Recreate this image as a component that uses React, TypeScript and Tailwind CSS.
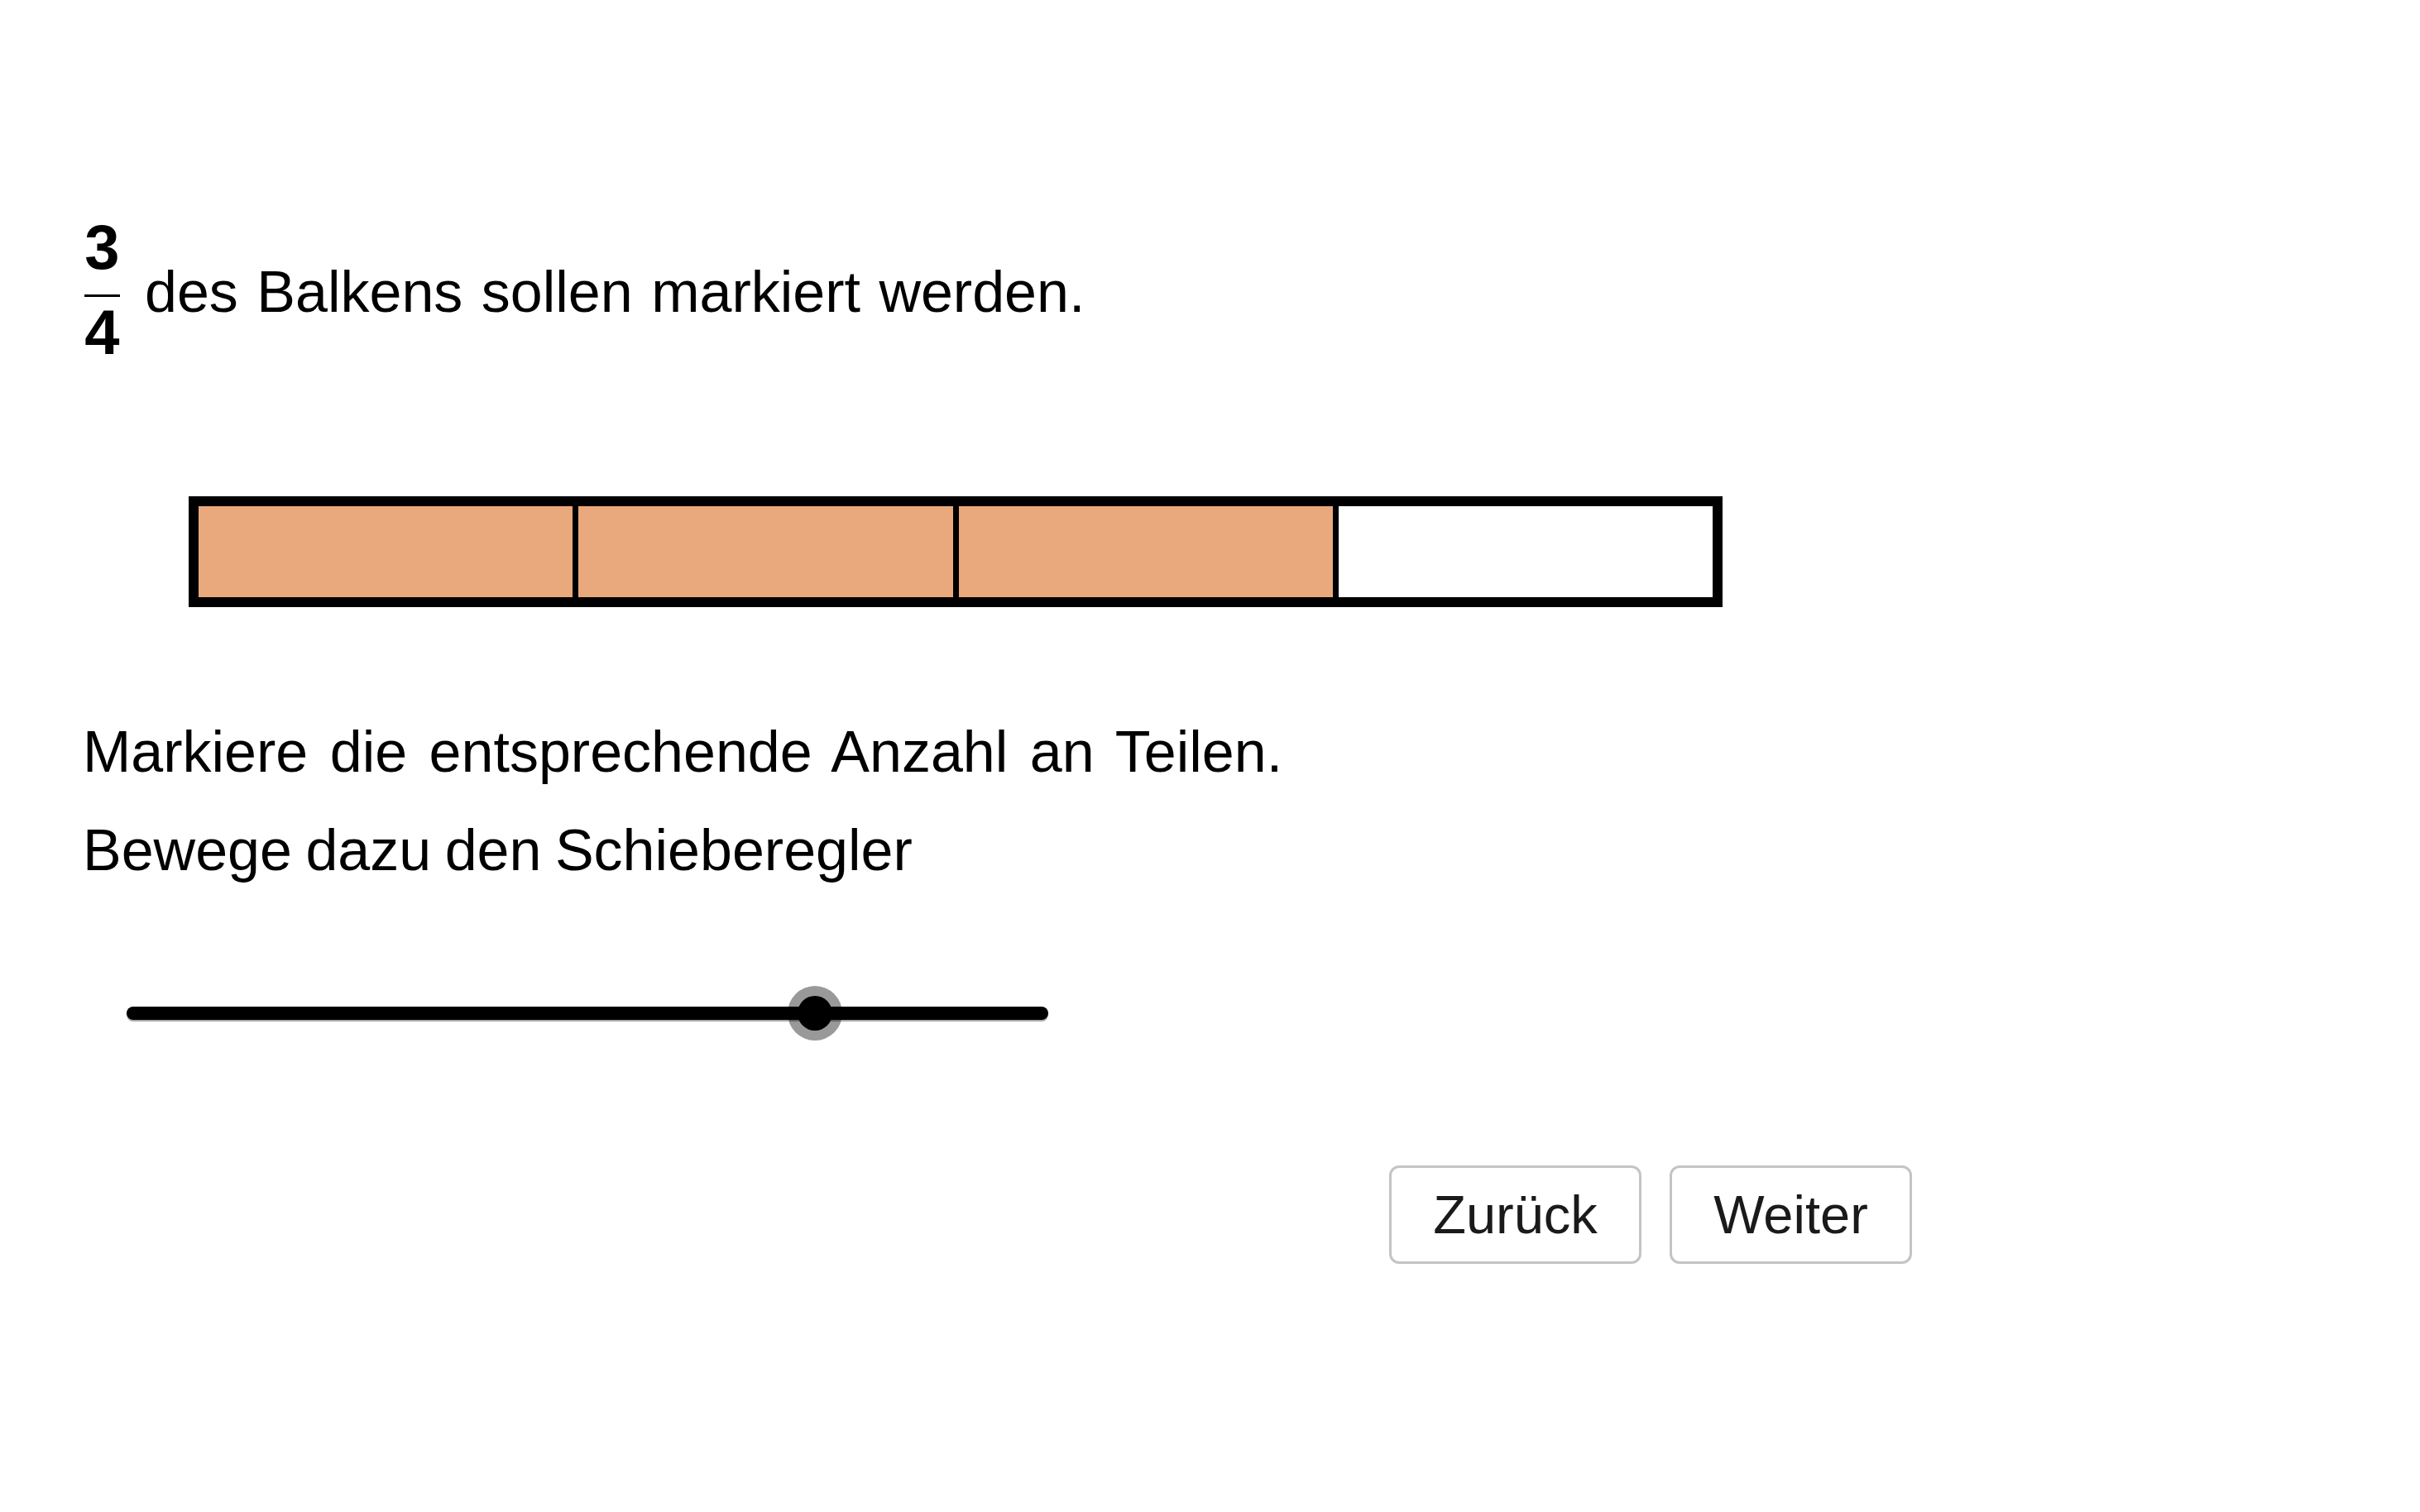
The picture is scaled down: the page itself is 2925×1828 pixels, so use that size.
import { useState } from "react";

const PARTS = 4;

function Fraction({ top, bottom }: { top: number; bottom: number }) {
  return (
    <div className="flex w-[43px] flex-col items-center">
      <span className="text-[76px] font-bold leading-[76px]">{top}</span>
      <div className="mt-[19px] h-[3px] w-[43px] bg-black" />
      <span className="mt-[5px] text-[76px] font-bold leading-[76px]">{bottom}</span>
    </div>
  );
}

export default function App() {
  const [value, setValue] = useState(3);

  const onTrack = (e: React.MouseEvent<HTMLDivElement>) => {
    const r = e.currentTarget.getBoundingClientRect();
    const v = Math.round(((e.clientX - r.left) / r.width) * PARTS);
    setValue(Math.max(0, Math.min(PARTS, v)));
  };

  return (
    <div className="h-[1828px] w-[2925px] overflow-hidden bg-white pt-[261px] text-black font-['Liberation_Sans',Arial,sans-serif]">
      {/* task */}
      <div className="ml-[102px] flex items-start">
        <Fraction top={3} bottom={4} />
        <p className="ml-[30px] mt-[57px] text-[70px] leading-[70px] [word-spacing:3px]">des Balkens sollen markiert werden.</p>
      </div>

      {/* bar */}
      <div className="ml-[228px] mt-[160px] flex h-[134px] w-[1854px] border-[12px] border-black">
        {Array.from({ length: PARTS }, (_, i) => (
          <div
            key={i}
            className={`flex-1 ${i > 0 ? "border-l-[7px] border-black" : ""} ${i < value ? "bg-[#e9a97c]" : "bg-white"}`}
          />
        ))}
      </div>

      {/* instructions */}
      <div className="ml-[100px] mt-[116px] text-[70px] leading-[119px]">
        <p className="[word-spacing:7px]">Markiere die entsprechende Anzahl an Teilen.</p>
        <p className="[word-spacing:-3px]">Bewege dazu den Schieberegler</p>
      </div>

      {/* slider */}
      <div
        className="relative ml-[153px] mt-[104px] flex h-[66px] w-[1114px] cursor-pointer items-center"
        onClick={onTrack}
      >
        <div className="h-[16px] w-full rounded-full bg-black shadow-[0_2px_1px_rgba(0,0,0,0.35)]" />
        <div
          className="absolute top-0 ml-[-4px] flex h-[66px] w-[66px] -translate-x-1/2 items-center justify-center rounded-full bg-black/40"
          style={{ left: `${(value / PARTS) * 100}%` }}
        >
          <div className="h-[42px] w-[42px] rounded-full bg-black" />
        </div>
      </div>

      {/* navigation */}
      <div className="ml-[1679px] mt-[151px] flex gap-[34px]">
        <button className="flex h-[119px] w-[305px] items-center justify-center rounded-[12px] border-[3px] border-[#c4c4c4] bg-white p-0 text-[65px] leading-none text-[#1a1a1a]">
          Zurück
        </button>
        <button className="flex h-[119px] w-[293px] items-center justify-center rounded-[12px] border-[3px] border-[#c4c4c4] bg-white p-0 text-[65px] leading-none text-[#1a1a1a]">
          Weiter
        </button>
      </div>
    </div>
  );
}
